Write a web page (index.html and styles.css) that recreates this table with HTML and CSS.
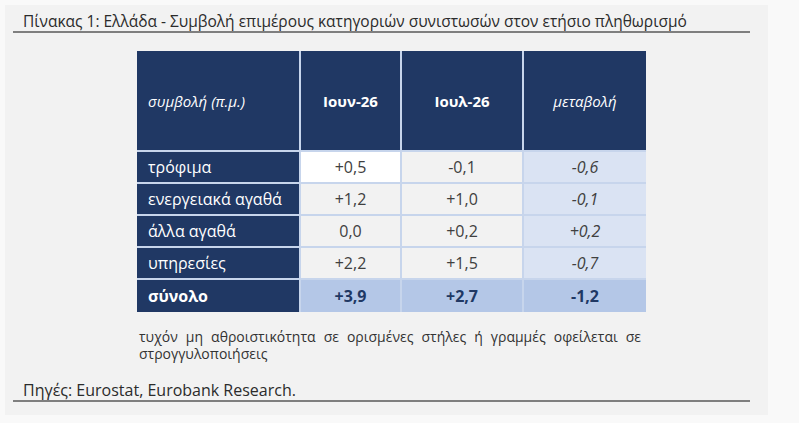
FILE: index.html
```html
<!DOCTYPE html>
<html lang="el">
<head>
<meta charset="utf-8">
<link rel="stylesheet" href="styles.css">
</head>
<body>
<div class="panel">
  <div class="title">Πίνακας 1: Ελλάδα - Συμβολή επιμέρους κατηγοριών συνιστωσών στον ετήσιο πληθωρισμό</div>
  <div class="content">
    <div class="grid">
      <div class="h first">συμβολή (π.μ.)</div>
      <div class="h bold">Ιουν-26</div>
      <div class="h bold">Ιουλ-26</div>
      <div class="h">μεταβολή</div>

      <div class="lab">τρόφιμα</div>
      <div class="v white">+0,5</div>
      <div class="v">-0,1</div>
      <div class="v chg">-0,6</div>

      <div class="lab">ενεργειακά αγαθά</div>
      <div class="v">+1,2</div>
      <div class="v">+1,0</div>
      <div class="v chg">-0,1</div>

      <div class="lab">άλλα αγαθά</div>
      <div class="v">0,0</div>
      <div class="v">+0,2</div>
      <div class="v chg">+0,2</div>

      <div class="lab">υπηρεσίες</div>
      <div class="v">+2,2</div>
      <div class="v">+1,5</div>
      <div class="v chg">-0,7</div>

      <div class="lab tot">σύνολο</div>
      <div class="v totv">+3,9</div>
      <div class="v totv">+2,7</div>
      <div class="v totv">-1,2</div>
    </div>
    <p class="note">τυχόν μη αθροιστικότητα σε ορισμένες στήλες ή γραμμές οφείλεται σε στρογγυλοποιήσεις</p>
  </div>
  <div class="source">Πηγές: Eurostat, Eurobank Research.</div>
</div>
</body>
</html>
```

FILE: styles.css
```css
html, body {
  margin: 0;
  padding: 0;
  background: #f9f9f9;
}
body {
  font-family: "Open Sans", "DejaVu Sans", sans-serif;
  color: #333;
  padding: 5px 0 0 5px;
}
.panel {
  width: 763px;
  height: 410px;
  background: #f2f2f2;
  box-sizing: border-box;
  padding-top: 7px;
}
.title {
  margin-left: 8px;
  width: 737px;
  padding-left: 10px;
  box-sizing: border-box;
  font-size: 15.5px;
  line-height: 19px;
  color: #2b2b2b;
  border-bottom: 2px solid #7f7f7f;
}
.content {
  padding-left: 132px;
  padding-top: 18px;
}
.grid {
  display: grid;
  grid-template-columns: 162px 99px 120px 122px;
  grid-template-rows: 99px repeat(4, 30px) 32px;
  gap: 2px;
  background: #c7d5ec;
  width: 509px;
}
.grid > div {
  display: flex;
  align-items: center;
  font-size: 16px;
}
.grid > .h {
  background: #203864;
  color: #fff;
  justify-content: center;
  font-style: italic;
  font-size: 15px;
}
.grid > .h.bold {
  font-style: normal;
  font-weight: 700;
}
.grid > .h.first {
  justify-content: flex-start;
  padding-left: 11px;
}
.lab {
  background: #203864;
  color: #fff;
  padding-left: 11px;
}
.lab.tot {
  font-weight: 700;
}
.v {
  background: #f2f2f2;
  justify-content: center;
  color: #404040;
}
.v.white {
  background: #fff;
}
.v.chg {
  background: #dae3f3;
  font-style: italic;
}
.v.totv {
  background: #b4c7e7;
  font-weight: 700;
  color: #203864;
}
.note {
  margin: 16px 0 0 2px;
  width: 502px;
  text-align: justify;
  font-size: 14px;
  line-height: 17px;
  color: #333;
}
.source {
  margin: 18px 0 0 8px;
  width: 737px;
  padding-left: 10px;
  box-sizing: border-box;
  font-size: 16px;
  line-height: 20px;
  color: #2b2b2b;
  border-bottom: 2px solid #7f7f7f;
}
```
